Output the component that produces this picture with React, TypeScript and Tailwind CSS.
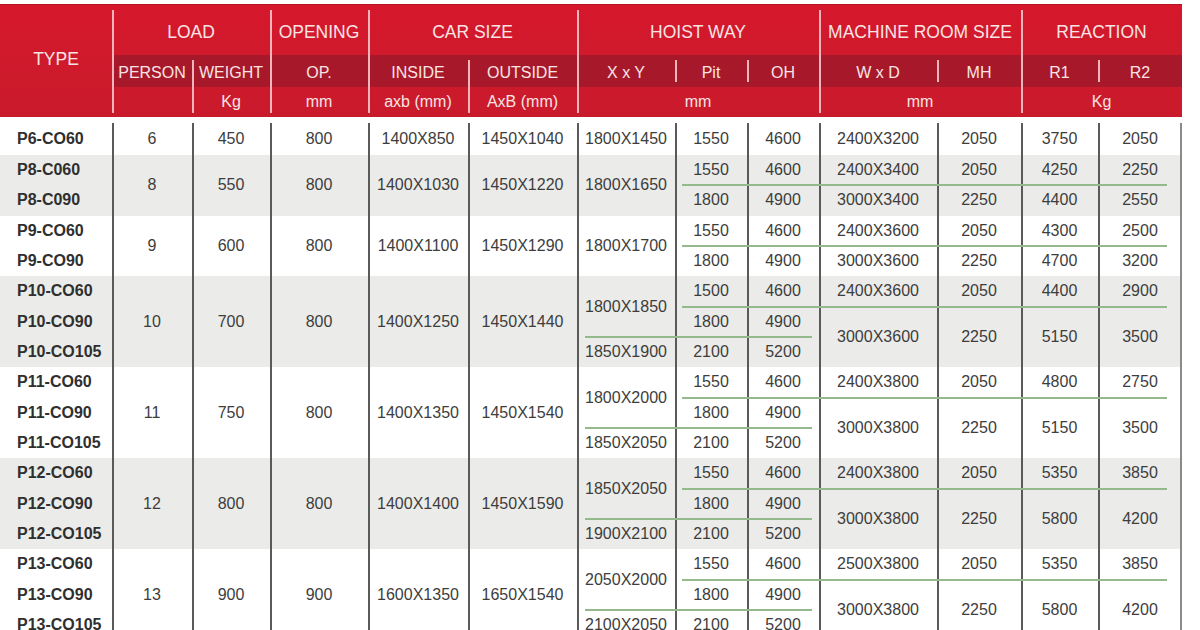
import React from "react";

// column widths follow the scan: boundaries at 112,192,270,368,468,577,675,747,819,937,1021,1098,1182
const COLS = "grid-cols-[112px_80px_78px_98px_100px_109px_98px_72px_72px_118px_84px_77px_84px]";

type Span = [string, number];

type Group = {
  types: string[];
  person: string;
  weight: string;
  op: string;
  inside: string;
  outside: string;
  xy: Span[];
  pit: string[];
  oh: string[];
  wd: Span[];
  mh: Span[];
  r1: Span[];
  r2: Span[];
};

const groups: Group[] = [
  {
    types: ["P6-CO60"],
    person: "6", weight: "450", op: "800", inside: "1400X850", outside: "1450X1040",
    xy: [["1800X1450", 1]],
    pit: ["1550"], oh: ["4600"],
    wd: [["2400X3200", 1]], mh: [["2050", 1]], r1: [["3750", 1]], r2: [["2050", 1]],
  },
  {
    types: ["P8-C060", "P8-C090"],
    person: "8", weight: "550", op: "800", inside: "1400X1030", outside: "1450X1220",
    xy: [["1800X1650", 2]],
    pit: ["1550", "1800"], oh: ["4600", "4900"],
    wd: [["2400X3400", 1], ["3000X3400", 1]],
    mh: [["2050", 1], ["2250", 1]],
    r1: [["4250", 1], ["4400", 1]],
    r2: [["2250", 1], ["2550", 1]],
  },
  {
    types: ["P9-CO60", "P9-CO90"],
    person: "9", weight: "600", op: "800", inside: "1400X1100", outside: "1450X1290",
    xy: [["1800X1700", 2]],
    pit: ["1550", "1800"], oh: ["4600", "4900"],
    wd: [["2400X3600", 1], ["3000X3600", 1]],
    mh: [["2050", 1], ["2250", 1]],
    r1: [["4300", 1], ["4700", 1]],
    r2: [["2500", 1], ["3200", 1]],
  },
  {
    types: ["P10-CO60", "P10-CO90", "P10-CO105"],
    person: "10", weight: "700", op: "800", inside: "1400X1250", outside: "1450X1440",
    xy: [["1800X1850", 2], ["1850X1900", 1]],
    pit: ["1500", "1800", "2100"], oh: ["4600", "4900", "5200"],
    wd: [["2400X3600", 1], ["3000X3600", 2]],
    mh: [["2050", 1], ["2250", 2]],
    r1: [["4400", 1], ["5150", 2]],
    r2: [["2900", 1], ["3500", 2]],
  },
  {
    types: ["P11-CO60", "P11-CO90", "P11-CO105"],
    person: "11", weight: "750", op: "800", inside: "1400X1350", outside: "1450X1540",
    xy: [["1800X2000", 2], ["1850X2050", 1]],
    pit: ["1550", "1800", "2100"], oh: ["4600", "4900", "5200"],
    wd: [["2400X3800", 1], ["3000X3800", 2]],
    mh: [["2050", 1], ["2250", 2]],
    r1: [["4800", 1], ["5150", 2]],
    r2: [["2750", 1], ["3500", 2]],
  },
  {
    types: ["P12-CO60", "P12-CO90", "P12-CO105"],
    person: "12", weight: "800", op: "800", inside: "1400X1400", outside: "1450X1590",
    xy: [["1850X2050", 2], ["1900X2100", 1]],
    pit: ["1550", "1800", "2100"], oh: ["4600", "4900", "5200"],
    wd: [["2400X3800", 1], ["3000X3800", 2]],
    mh: [["2050", 1], ["2250", 2]],
    r1: [["5350", 1], ["5800", 2]],
    r2: [["3850", 1], ["4200", 2]],
  },
  {
    types: ["P13-CO60", "P13-CO90", "P13-CO105"],
    person: "13", weight: "900", op: "900", inside: "1600X1350", outside: "1650X1540",
    xy: [["2050X2000", 2], ["2100X2050", 1]],
    pit: ["1550", "1800", "2100"], oh: ["4600", "4900", "5200"],
    wd: [["2500X3800", 1], ["3000X3800", 2]],
    mh: [["2050", 1], ["2250", 2]],
    r1: [["5350", 1], ["5800", 2]],
    r2: [["3850", 1], ["4200", 2]],
  },
];

const dataLines = [
  "col-start-2", "col-start-3", "col-start-4", "col-start-5", "col-start-6", "col-start-7",
  "col-start-8", "col-start-9", "col-start-10", "col-start-11", "col-start-12", "col-start-13",
];

function Cell({ col, row, span = 1, children, className = "" }: {
  col: number; row: number; span?: number; children: React.ReactNode; className?: string;
}) {
  return (
    <div
      className={`flex items-center justify-center ${className}`}
      style={{ gridColumn: col, gridRow: `${row} / span ${span}` }}
    >
      {children}
    </div>
  );
}

function Header() {
  return (
    <div className={`grid ${COLS} grid-rows-[50px_32px_29.5px] bg-linear-to-b from-[#d6172c] via-[#cf1a2c] to-[#c91a2b] text-[#f8e4e4] border-t border-[#b5121f]`}>
      {/* darker band behind the sub headings */}
      <div className="col-start-2 col-span-12 row-start-2 bg-[#a7192a]" />

      <div className="col-start-1 row-start-1 row-span-3 flex items-center justify-center text-[17.5px] pb-[3px]">TYPE</div>

      <div className="col-start-2 col-span-2 row-start-1 flex items-center justify-center text-[17.5px] pt-[4px]">LOAD</div>
      <div className="col-start-4 row-start-1 flex items-center justify-center text-[17.5px] pt-[4px]">OPENING</div>
      <div className="col-start-5 col-span-2 row-start-1 flex items-center justify-center text-[17.5px] pt-[4px]">CAR SIZE</div>
      <div className="col-start-7 col-span-3 row-start-1 flex items-center justify-center text-[17.5px] pt-[4px]">HOIST WAY</div>
      <div className="col-start-10 col-span-2 row-start-1 flex items-center justify-center text-[17.5px] pt-[4px]">MACHINE ROOM SIZE</div>
      <div className="col-start-12 col-span-2 row-start-1 flex items-center justify-center text-[17.5px] pt-[4px]">REACTION</div>

      {/* sub headings */}
      <div className="col-start-2 row-start-2 flex items-center justify-center text-[16px] pt-[3px]">PERSON</div>
      <div className="col-start-3 row-start-2 flex items-center justify-center text-[16px] pt-[3px]">WEIGHT</div>
      <div className="col-start-4 row-start-2 flex items-center justify-center text-[16px] pt-[3px]">OP.</div>
      <div className="col-start-5 row-start-2 flex items-center justify-center text-[16px] pt-[3px]">INSIDE</div>
      <div className="col-start-6 row-start-2 flex items-center justify-center text-[16px] pt-[3px]">OUTSIDE</div>
      <div className="col-start-7 row-start-2 flex items-center justify-center text-[16px] pt-[3px]">X x Y</div>
      <div className="col-start-8 row-start-2 flex items-center justify-center text-[16px] pt-[3px]">Pit</div>
      <div className="col-start-9 row-start-2 flex items-center justify-center text-[16px] pt-[3px]">OH</div>
      <div className="col-start-10 row-start-2 flex items-center justify-center text-[16px] pt-[3px]">W x D</div>
      <div className="col-start-11 row-start-2 flex items-center justify-center text-[16px] pt-[3px]">MH</div>
      <div className="col-start-12 row-start-2 flex items-center justify-center text-[16px] pt-[3px]">R1</div>
      <div className="col-start-13 row-start-2 flex items-center justify-center text-[16px] pt-[3px]">R2</div>

      {/* units */}
      <div className="col-start-3 row-start-3 flex items-center justify-center text-[16px]">Kg</div>
      <div className="col-start-4 row-start-3 flex items-center justify-center text-[16px]">mm</div>
      <div className="col-start-5 row-start-3 flex items-center justify-center text-[16px]">axb (mm)</div>
      <div className="col-start-6 row-start-3 flex items-center justify-center text-[16px]">AxB (mm)</div>
      <div className="col-start-7 col-span-3 row-start-3 flex items-center justify-center text-[16px]">mm</div>
      <div className="col-start-10 col-span-2 row-start-3 flex items-center justify-center text-[16px]">mm</div>
      <div className="col-start-12 col-span-2 row-start-3 flex items-center justify-center text-[16px]">Kg</div>

      {/* separators */}
      <div className="col-start-2 row-start-1 row-span-3 border-l-2 border-[#f0b5ba] mt-[5px] mb-[4px]" />
      <div className="col-start-4 row-start-1 row-span-3 border-l-2 border-[#f0b5ba] mt-[5px] mb-[4px]" />
      <div className="col-start-5 row-start-1 row-span-3 border-l-2 border-[#f0b5ba] mt-[5px] mb-[4px]" />
      <div className="col-start-7 row-start-1 row-span-3 border-l-2 border-[#f0b5ba] mt-[5px] mb-[4px]" />
      <div className="col-start-10 row-start-1 row-span-3 border-l-2 border-[#f0b5ba] mt-[5px] mb-[4px]" />
      <div className="col-start-12 row-start-1 row-span-3 border-l-2 border-[#f0b5ba] mt-[5px] mb-[4px]" />
      <div className="col-start-3 row-start-2 row-span-2 border-l-2 border-[#f0b5ba] mt-[5px] mb-[4px]" />
      <div className="col-start-6 row-start-2 row-span-2 border-l-2 border-[#f0b5ba] mt-[5px] mb-[4px]" />
      <div className="col-start-8 row-start-2 border-l-2 border-[#f0b5ba] my-[5px]" />
      <div className="col-start-9 row-start-2 border-l-2 border-[#f0b5ba] my-[5px]" />
      <div className="col-start-11 row-start-2 border-l-2 border-[#f0b5ba] my-[5px]" />
      <div className="col-start-13 row-start-2 border-l-2 border-[#f0b5ba] my-[5px]" />
    </div>
  );
}

function spans(values: Span[], col: number, start: number, key: string) {
  let r = start;
  return values.map(([v, s], i) => {
    const cell = (
      <Cell key={`${key}-${i}`} col={col} row={r} span={s}>{v}</Cell>
    );
    r += s;
    return cell;
  });
}

function Body() {
  const cells: React.ReactNode[] = [];
  const shades: React.ReactNode[] = [];
  const greens: React.ReactNode[] = [];
  let row = 1;

  groups.forEach((g, gi) => {
    const n = g.types.length;
    if (gi % 2 === 1) {
      shades.push(
        <div key={`shade-${gi}`} className="bg-[#ebebe9]" style={{ gridColumn: "1 / -1", gridRow: `${row} / span ${n}` }} />
      );
    }
    g.types.forEach((t, i) => {
      cells.push(
        <div key={`t-${gi}-${i}`} className="flex items-center pl-[17px] font-bold text-[#2f2f2f]" style={{ gridColumn: 1, gridRow: row + i }}>
          {t}
        </div>
      );
    });
    cells.push(<Cell key={`p-${gi}`} col={2} row={row} span={n}>{g.person}</Cell>);
    cells.push(<Cell key={`w-${gi}`} col={3} row={row} span={n}>{g.weight}</Cell>);
    cells.push(<Cell key={`o-${gi}`} col={4} row={row} span={n}>{g.op}</Cell>);
    cells.push(<Cell key={`i-${gi}`} col={5} row={row} span={n}>{g.inside}</Cell>);
    cells.push(<Cell key={`u-${gi}`} col={6} row={row} span={n}>{g.outside}</Cell>);
    cells.push(...spans(g.xy, 7, row, `xy-${gi}`));
    g.pit.forEach((v, i) => cells.push(<Cell key={`pit-${gi}-${i}`} col={8} row={row + i}>{v}</Cell>));
    g.oh.forEach((v, i) => cells.push(<Cell key={`oh-${gi}-${i}`} col={9} row={row + i}>{v}</Cell>));
    cells.push(...spans(g.wd, 10, row, `wd-${gi}`));
    cells.push(...spans(g.mh, 11, row, `mh-${gi}`));
    cells.push(...spans(g.r1, 12, row, `r1-${gi}`));
    cells.push(...spans(g.r2, 13, row, `r2-${gi}`));

    // green rules between sub rows
    if (n >= 2) {
      greens.push(
        <div key={`gl-${gi}`} className="self-end h-[2px] bg-[#93b98d] ml-[7px] mr-[15px] translate-y-[1px]" style={{ gridColumn: "8 / span 6", gridRow: row }} />
      );
    }
    if (n === 3) {
      greens.push(
        <div key={`gs-${gi}`} className="self-end h-[2px] bg-[#93b98d] ml-[8px] mr-[7px] translate-y-[1px]" style={{ gridColumn: "7 / span 3", gridRow: row + 1 }} />
      );
    }
    row += n;
  });

  return (
    <div className={`grid ${COLS} grid-rows-[32px_repeat(16,30.33px)] mt-[6.5px] text-[16px] text-[#3d3d3d]`}>
      {shades}
      {dataLines.map((c) => (
        <div key={c} className={`${c} row-span-full border-l-2 border-[#5a5a5a]`} />
      ))}
      <div className="col-start-13 row-span-full border-r-2 border-[#8a8a8a]" />
      {greens}
      {cells}
    </div>
  );
}

export default function App() {
  return (
    <main className="w-[1200px] h-[630px] overflow-hidden bg-white pt-[4px] font-['Liberation_Sans',Arial,sans-serif]">
      <div className="w-[1182px]">
        <Header />
        <Body />
      </div>
    </main>
  );
}
